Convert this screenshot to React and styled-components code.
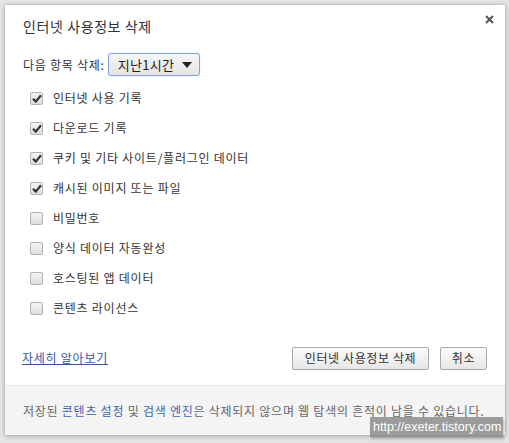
import React, { useState } from 'react';
import styled, { createGlobalStyle } from 'styled-components';

const GlobalStyle = createGlobalStyle`
  * { box-sizing: border-box; }
  html, body {
    margin: 0;
    padding: 0;
    background: #e6e6e6;
  }
  body {
    font-family: "Noto Sans CJK KR", "Noto Sans", sans-serif;
    font-size: 12px;
    letter-spacing: 0.75px;
    color: #333;
  }
`;

const Page = styled.div`
  position: relative;
  width: 509px;
  height: 443px;
  padding: 5px 4px 8px 5px;
  background: #e4e4e4;
  overflow: hidden;
`;

const Dialog = styled.div`
  width: 500px;
  height: 430px;
  background: #fff;
  display: flex;
  flex-direction: column;
  box-shadow: 0 0 3px rgba(0, 0, 0, 0.25), 0 2px 6px rgba(0, 0, 0, 0.15);
`;

const Header = styled.div`
  height: 36px;
  padding: 11px 10px 0 18px;
  display: flex;
  justify-content: space-between;
  align-items: flex-start;
`;

const Title = styled.h1`
  margin: 0;
  font-size: 14px;
  font-weight: normal;
  line-height: 20px;
  letter-spacing: 0.6px;
  color: #333;
`;

const Close = styled.button`
  border: 0;
  background: none;
  padding: 0;
  margin-top: -3px;
  width: 12px;
  height: 12px;
  display: flex;
  align-items: center;
  justify-content: center;
  cursor: pointer;
`;

const Body = styled.div`
  padding: 0 18px;
  display: flex;
  flex-direction: column;
`;

const RangeRow = styled.div`
  margin-top: 12px;
  height: 23px;
  display: flex;
  align-items: center;
  gap: 3px;
  line-height: 16px;
`;

const Select = styled.div`
  width: 92px;
  height: 23px;
  border: 1px solid #7ea3d6;
  border-radius: 3px;
  background: linear-gradient(#f6f6f6, #e4e4e4);
  display: flex;
  align-items: center;
  justify-content: space-between;
  padding: 0 7px 0 9px;
  font-size: 13px;
  letter-spacing: 0.3px;
  color: #222;
  box-shadow: 0 0 1px #a9c5ea;
`;

const Arrow = styled.span`
  width: 0;
  height: 0;
  border-left: 5px solid transparent;
  border-right: 5px solid transparent;
  border-top: 6px solid #222;
`;

const List = styled.div`
  padding: 7px 0 0 7px;
  display: flex;
  flex-direction: column;
`;

const Row = styled.label`
  height: 30px;
  display: flex;
  align-items: center;
  gap: 10px;
  line-height: 16px;
  color: #333;
  cursor: pointer;
`;

const Box = styled.span`
  width: 13px;
  height: 13px;
  border: 1px solid #b3b3b3;
  border-radius: 2px;
  background: linear-gradient(#f4f4f4, #dedede);
  display: flex;
  align-items: center;
  justify-content: center;
  flex: none;
`;

const Actions = styled.div`
  margin-top: 23px;
  height: 24px;
  display: flex;
  align-items: center;
  padding: 0 18px 0 17px;
`;

const Link = styled.a`
  color: #3057a5;
  text-decoration: underline;
  line-height: 16px;
  flex: 1;
`;

const Button = styled.button`
  height: 23px;
  width: ${({ w }) => w}px;
  margin-left: ${({ gap }) => gap || 0}px;
  border: 1px solid #a8a8a8;
  border-radius: 2px;
  background: linear-gradient(#fbfbfb, #e6e6e6);
  font-family: inherit;
  font-size: 12px;
  letter-spacing: 0.6px;
  line-height: 16px;
  color: #333;
  padding: 0;
`;

const Footer = styled.div`
  margin-top: auto;
  height: 50px;
  background: #f4f4f4;
  border-top: 1px solid #e8e8e8;
  display: flex;
  align-items: center;
  padding: 0 18px;
  color: #666;
  line-height: 16px;
  white-space: nowrap;
`;

const FootLink = styled.a`
  color: #3d63b0;
  text-decoration: none;
`;

const Watermark = styled.div`
  position: absolute;
  left: 370px;
  top: 417px;
  width: 133px;
  height: 20px;
  background: rgba(140, 140, 140, 0.85);
  color: #fff;
  font-family: "Liberation Sans", Arial, sans-serif;
  font-size: 12.5px;
  letter-spacing: 0;
  line-height: 20px;
  padding-left: 3px;
  box-shadow: 1px 2px 2px rgba(0, 0, 0, 0.2);
`;

const items = [
  ['인터넷 사용 기록', true],
  ['다운로드 기록', true],
  ['쿠키 및 기타 사이트/플러그인 데이터', true],
  ['캐시된 이미지 또는 파일', true],
  ['비밀번호', false],
  ['양식 데이터 자동완성', false],
  ['호스팅된 앱 데이터', false],
  ['콘텐츠 라이선스', false],
];

function Check() {
  return (
    <svg width="10" height="9" viewBox="0 0 10 9">
      <path d="M1 4.8 L3.8 7.6 L9 1.2" fill="none" stroke="#333" strokeWidth="2.2" strokeLinejoin="round" />
    </svg>
  );
}

export default function App() {
  const [checked, setChecked] = useState(items.map((i) => i[1]));

  return (
    <>
      <GlobalStyle />
      <Page>
        <Dialog>
          <Header>
            <Title>인터넷 사용정보 삭제</Title>
            <Close aria-label="닫기">
              <svg width="9" height="9" viewBox="0 0 9 9">
                <path d="M1 1 L8 8 M8 1 L1 8" stroke="#555" strokeWidth="2" />
              </svg>
            </Close>
          </Header>
          <Body>
            <RangeRow>
              <span>다음 항목 삭제:</span>
              <Select>
                <span>지난1시간</span>
                <Arrow />
              </Select>
            </RangeRow>
            <List>
              {items.map(([label], i) => (
                <Row
                  key={label}
                  onClick={() => setChecked(checked.map((c, j) => (j === i ? !c : c)))}
                >
                  <Box>{checked[i] && <Check />}</Box>
                  <span>{label}</span>
                </Row>
              ))}
            </List>
          </Body>
          <Actions>
            <Link href="#">자세히 알아보기</Link>
            <Button w={137}>인터넷 사용정보 삭제</Button>
            <Button w={47} gap={11}>취소</Button>
          </Actions>
          <Footer>
            저장된&nbsp;<FootLink href="#">콘텐츠 설정</FootLink>&nbsp;및&nbsp;
            <FootLink href="#">검색 엔진</FootLink>은 삭제되지 않으며 웹 탐색의 흔적이 남을 수 있습니다.
          </Footer>
        </Dialog>
        <Watermark>http://exeter.tistory.com</Watermark>
      </Page>
    </>
  );
}
